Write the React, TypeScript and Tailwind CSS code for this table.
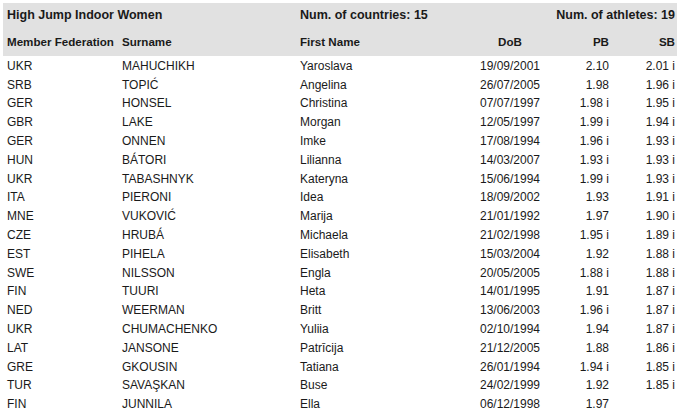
const rows: [string, string, string, string, string, string][] = [
  ["UKR", "MAHUCHIKH", "Yaroslava", "19/09/2001", "2.10", "2.01 i"],
  ["SRB", "TOPIĆ", "Angelina", "26/07/2005", "1.98", "1.96 i"],
  ["GER", "HONSEL", "Christina", "07/07/1997", "1.98 i", "1.95 i"],
  ["GBR", "LAKE", "Morgan", "12/05/1997", "1.99 i", "1.94 i"],
  ["GER", "ONNEN", "Imke", "17/08/1994", "1.96 i", "1.93 i"],
  ["HUN", "BÁTORI", "Lilianna", "14/03/2007", "1.93 i", "1.93 i"],
  ["UKR", "TABASHNYK", "Kateryna", "15/06/1994", "1.99 i", "1.93 i"],
  ["ITA", "PIERONI", "Idea", "18/09/2002", "1.93", "1.91 i"],
  ["MNE", "VUKOVIĆ", "Marija", "21/01/1992", "1.97", "1.90 i"],
  ["CZE", "HRUBÁ", "Michaela", "21/02/1998", "1.95 i", "1.89 i"],
  ["EST", "PIHELA", "Elisabeth", "15/03/2004", "1.92", "1.88 i"],
  ["SWE", "NILSSON", "Engla", "20/05/2005", "1.88 i", "1.88 i"],
  ["FIN", "TUURI", "Heta", "14/01/1995", "1.91", "1.87 i"],
  ["NED", "WEERMAN", "Britt", "13/06/2003", "1.96 i", "1.87 i"],
  ["UKR", "CHUMACHENKO", "Yuliia", "02/10/1994", "1.94", "1.87 i"],
  ["LAT", "JANSONE", "Patrīcija", "21/12/2005", "1.88", "1.86 i"],
  ["GRE", "GKOUSIN", "Tatiana", "26/01/1994", "1.94 i", "1.85 i"],
  ["TUR", "SAVAŞKAN", "Buse", "24/02/1999", "1.92", "1.85 i"],
  ["FIN", "JUNNILA", "Ella", "06/12/1998", "1.97", ""],
];

export default function App() {
  return (
    <div
      className="h-[417px] w-[680px] overflow-hidden bg-white px-[3px] pt-[3px] text-[12px] text-[#1a1a1a]"
      style={{ fontFamily: '"Liberation Sans", Arial, sans-serif' }}
    >
      <div className="bg-[#e1e1e1] font-bold whitespace-nowrap">
        <div className="flex h-[24px] items-center text-[12.5px]">
          <div className="w-[297px] pl-[4px]">High Jump Indoor Women</div>
          <div className="flex-1">Num. of countries: 15</div>
          <div className="pr-[2px]">Num. of athletes: 19</div>
        </div>
        <div className="flex h-[29px] items-center text-[11.6px]">
          <div className="w-[119px] pl-[4px]">Member Federation</div>
          <div className="w-[178px]">Surname</div>
          <div className="w-[155px]">First Name</div>
          <div className="w-[110px] text-center">DoB</div>
          <div className="w-[44px] text-right">PB</div>
          <div className="w-[66px] text-right">SB</div>
        </div>
      </div>
      <div className="pt-[0.5px] whitespace-nowrap">
        {rows.map((r, i) => (
          <div key={i} className="flex h-[18.8px] items-center">
            <div className="w-[119px] pl-[4px]">{r[0]}</div>
            <div className="w-[178px]">{r[1]}</div>
            <div className="w-[155px]">{r[2]}</div>
            <div className="w-[110px] text-center">{r[3]}</div>
            <div className="w-[44px] text-right">{r[4]}</div>
            <div className="w-[66px] text-right">{r[5]}</div>
          </div>
        ))}
      </div>
    </div>
  );
}
